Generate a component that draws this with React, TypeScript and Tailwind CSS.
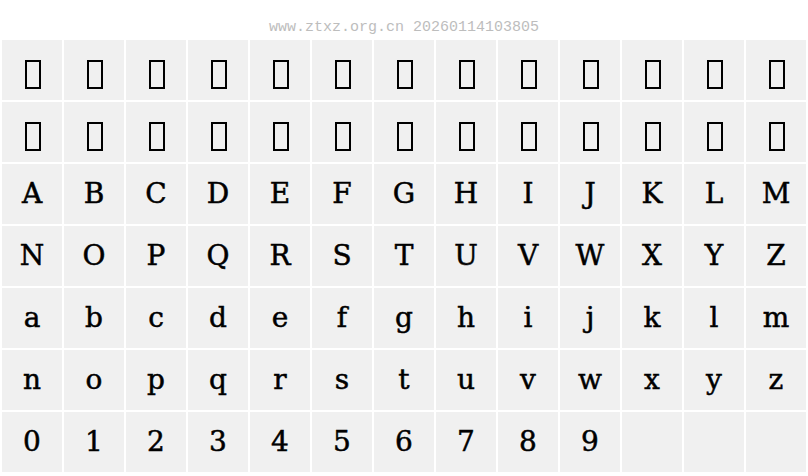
const upper = 'ABCDEFGHIJKLMNOPQRSTUVWXYZ'.split('')
const lower = 'abcdefghijklmnopqrstuvwxyz'.split('')
const digits = '0123456789'.split('')

type Cell = { kind: 'box' } | { kind: 'char'; ch: string } | { kind: 'empty' }

const cells: Cell[] = [
  ...Array.from({ length: 26 }, () => ({ kind: 'box' as const })),
  ...upper.map(ch => ({ kind: 'char' as const, ch })),
  ...lower.map(ch => ({ kind: 'char' as const, ch })),
  ...digits.map(ch => ({ kind: 'char' as const, ch })),
  ...Array.from({ length: 3 }, () => ({ kind: 'empty' as const })),
]

export default function App() {
  return (
    <div className="w-[808px] h-[476px] bg-white overflow-hidden">
      <div className="h-[40px] flex items-end justify-center pb-[4px]">
        <span className="font-['Liberation_Mono',monospace] text-[15px] leading-[16px] text-[#bdbdbd]">
          www.ztxz.org.cn 20260114103805
        </span>
      </div>
      <div className="grid grid-cols-[repeat(13,60px)] auto-rows-[60px] gap-[2px] pl-[2px]">
        {cells.map((c, i) => (
          <div key={i} className="bg-[#f0f0f0] flex items-center justify-center">
            {c.kind === 'box' && (
              <div className="w-[16px] h-[29px] border-2 border-black mt-[9px] ml-[2px]" />
            )}
            {c.kind === 'char' && (
              <span className="font-['DejaVu_Serif',serif] text-[28px] leading-none text-black [-webkit-text-stroke:0.5px_black]">
                {c.ch}
              </span>
            )}
          </div>
        ))}
      </div>
    </div>
  )
}
